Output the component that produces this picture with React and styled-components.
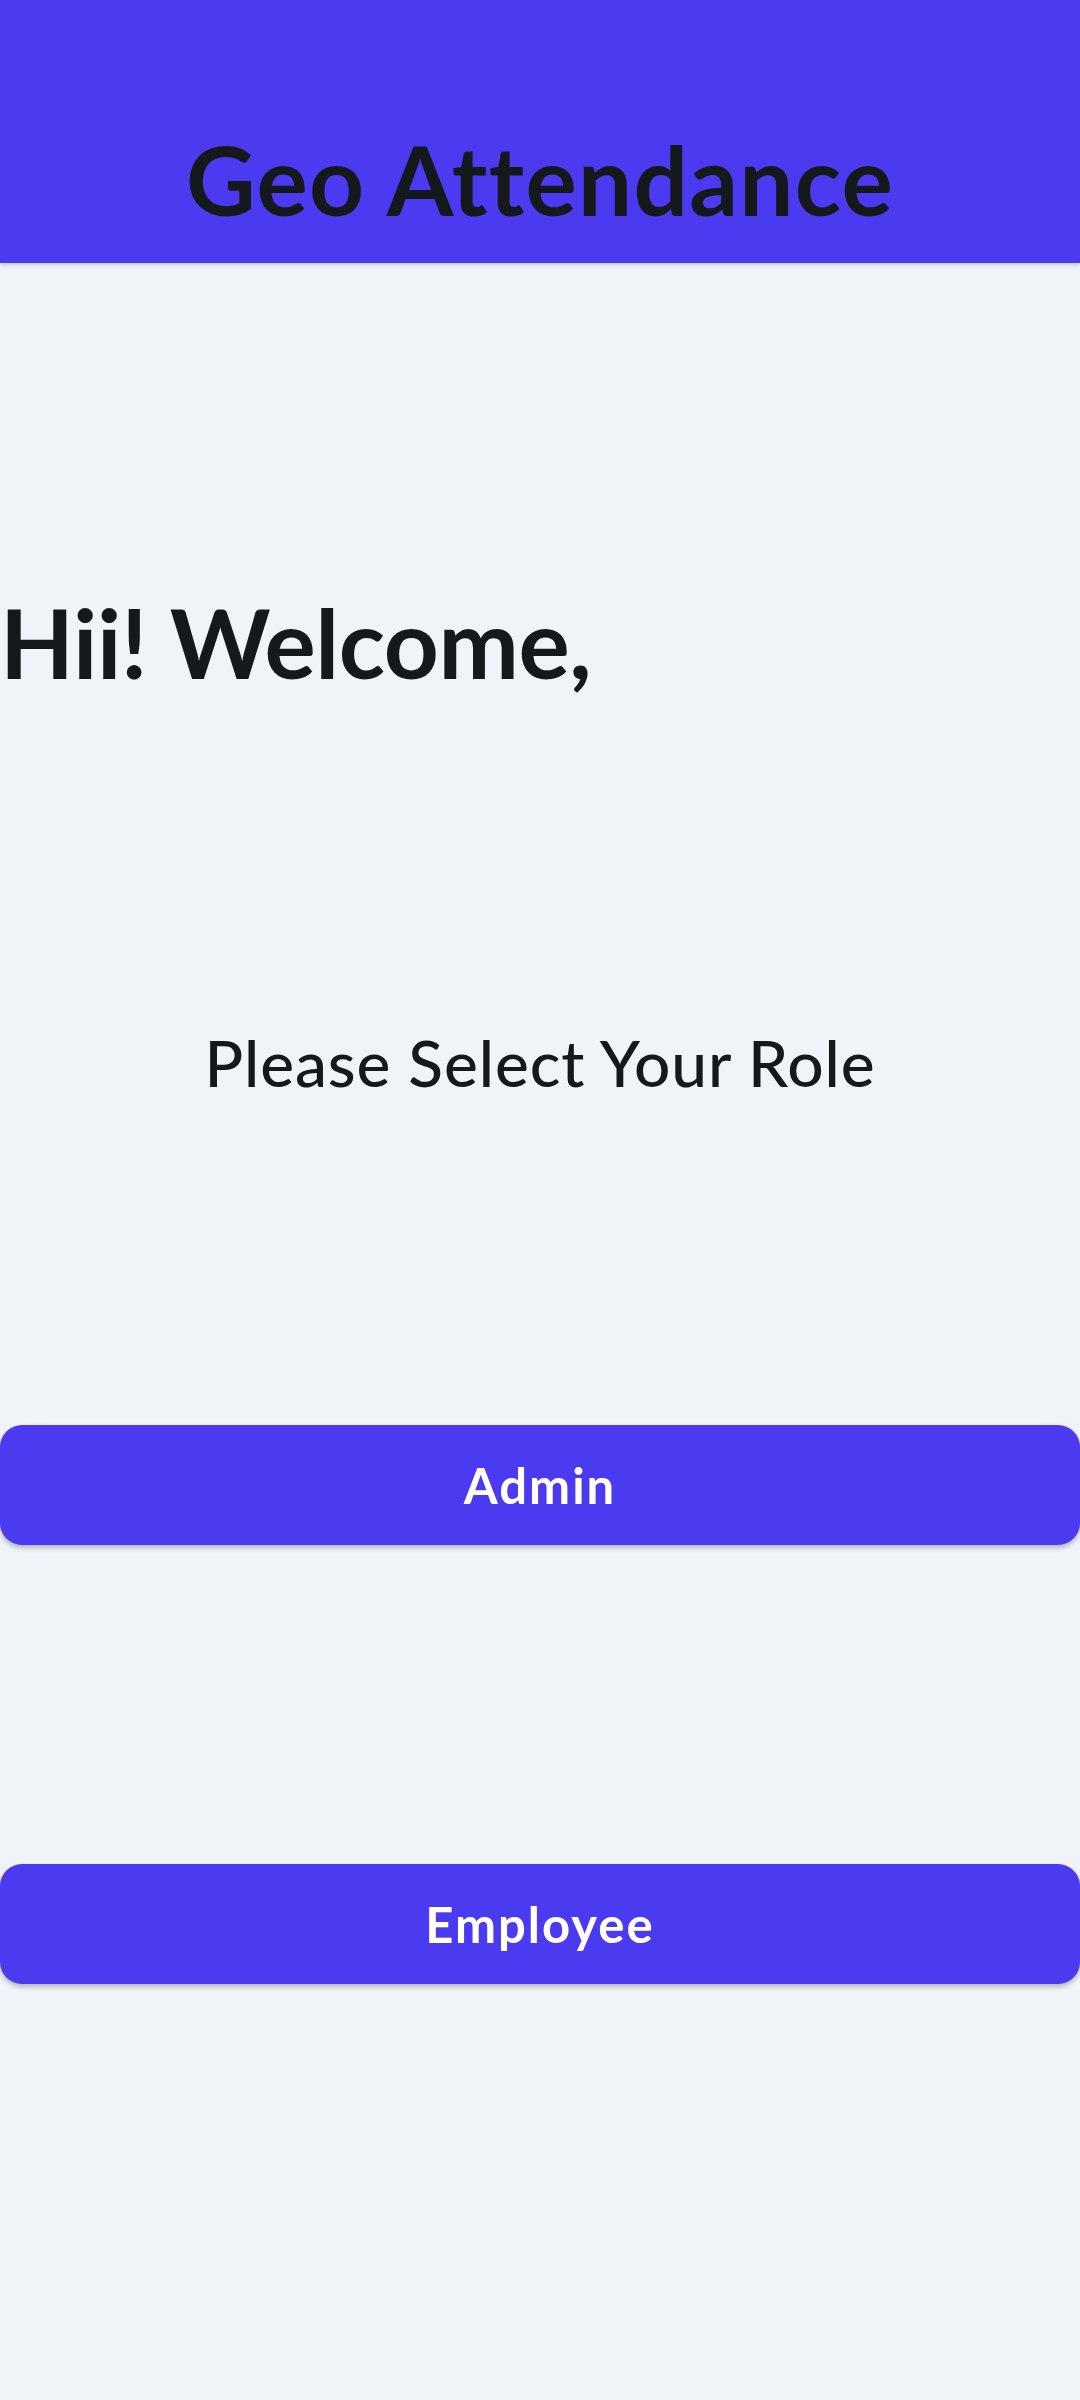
import React from "react";
import styled, { createGlobalStyle } from "styled-components";

const Global = createGlobalStyle`
  html, body { margin: 0; padding: 0; background: #f0f3f8; }
  body { font-family: Lato, "Noto Sans", sans-serif; }
  * { box-sizing: border-box; }
`;

const Page = styled.div`
  width: 1080px;
  min-height: 2400px;
  background: #f0f3f8;
  display: flex;
  flex-direction: column;
`;

const Header = styled.header`
  height: 263px;
  background: #4b3aef;
  display: flex;
  justify-content: center;
  align-items: flex-start;
  padding-top: 131px;
  box-shadow: 0 2px 4px rgba(0, 0, 0, 0.18);
  position: relative;
  z-index: 1;
`;

const Title = styled.h1`
  margin: 0;
  font-family: Lato, "Noto Sans", sans-serif;
  font-weight: 700;
  font-size: 96px;
  line-height: 96px;
  color: #16191c;
  letter-spacing: 1.3px;
`;

const Welcome = styled(Title)`
  margin-top: 331px;
  padding-left: 0;
  letter-spacing: -0.4px;
  text-align: left;
`;

const Subtitle = styled.h2`
  margin: 341px 0 0;
  font-weight: 500;
  font-size: 64px;
  line-height: 64px;
  color: #16191c;
  text-align: center;
  letter-spacing: 0.9px;
`;

const RoleButton = styled.button`
  margin-top: ${(p) => p.$gap}px;
  width: 100%;
  height: 120px;
  border: none;
  border-radius: 22px;
  background: #4b3aef;
  color: #ffffff;
  font-family: Lato, "Noto Sans", sans-serif;
  font-weight: 700;
  font-size: 49px;
  letter-spacing: 2px;
  display: flex;
  align-items: center;
  justify-content: center;
  box-shadow: 0 3px 5px rgba(0, 0, 0, 0.25);
  cursor: pointer;
  padding: 0;
`;

export default function App() {
  return (
    <>
      <Global />
      <Page>
        <Header>
          <Title>Geo Attendance</Title>
        </Header>
        <Welcome>Hii! Welcome,</Welcome>
        <Subtitle>Please Select Your Role</Subtitle>
        <RoleButton $gap={330}>Admin</RoleButton>
        <RoleButton $gap={319}>Employee</RoleButton>
      </Page>
    </>
  );
}
